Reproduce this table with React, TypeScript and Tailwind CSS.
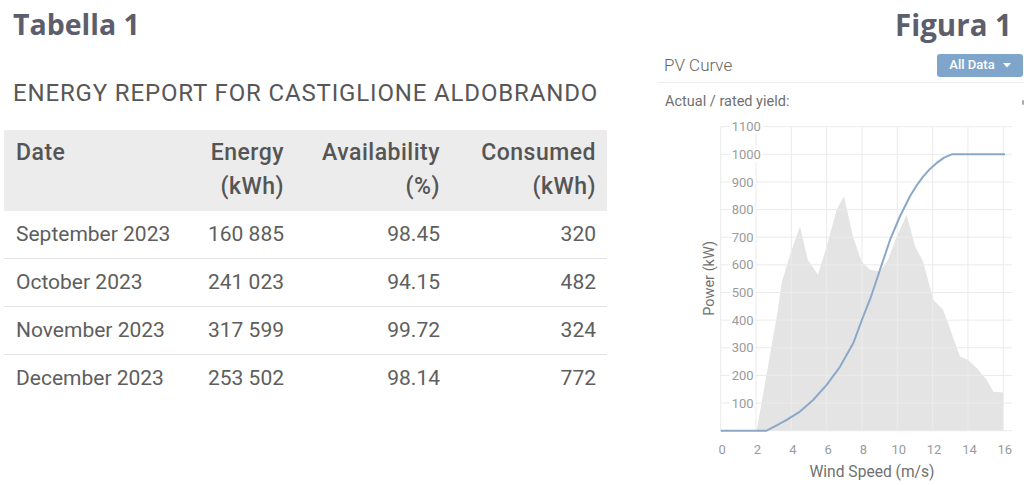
import React from "react";

const rows = [
  { date: "September 2023", energy: "160 885", avail: "98.45", used: "320" },
  { date: "October 2023", energy: "241 023", avail: "94.15", used: "482" },
  { date: "November 2023", energy: "317 599", avail: "99.72", used: "324" },
  { date: "December 2023", energy: "253 502", avail: "98.14", used: "772" },
];

// wind distribution (grey area), [wind m/s, power kW]
const dist = [
  [2.04, 0], [3.24, 437], [3.45, 535], [4.02, 655], [4.49, 739], [4.94, 618],
  [5.51, 564], [6.0, 667], [6.57, 800], [6.98, 847], [7.49, 703], [7.98, 612],
  [8.45, 582], [9.02, 576], [9.47, 618], [9.97, 703], [10.53, 781], [11.0, 667],
  [11.46, 612], [12.04, 474], [12.6, 437], [13.55, 268], [14.02, 256], [14.5, 226],
  [15.06, 184], [15.44, 141], [16.0, 138], [16.0, 0],
];

// power curve
const curve = [
  [0, 0], [2.6, 0], [3.2, 20], [3.74, 39], [4.49, 69], [5.23, 111], [6.0, 166],
  [6.76, 232], [7.51, 317], [8.07, 413], [8.45, 474], [8.64, 510], [9.02, 582],
  [9.59, 691], [10.15, 775], [10.72, 848], [11.1, 888], [11.47, 920], [11.85, 947],
  [12.23, 969], [12.65, 988], [13.08, 1000], [16.1, 1000],
];

const X = (w: number) => 62.7 + w * 17.66;
const Y = (p: number) => 322.7 - p * 0.2764;

function Chart() {
  const area = dist.map(([w, p], i) => `${i ? "L" : "M"}${X(w).toFixed(1)} ${Y(p).toFixed(1)}`).join(" ") + " Z";
  const line = curve.map(([w, p]) => `${X(w).toFixed(1)},${Y(p).toFixed(1)}`).join(" ");
  const ys = [0, 100, 200, 300, 400, 500, 600, 700, 800, 900, 1000, 1100];
  const xs = [0, 2, 4, 6, 8, 10, 12, 14, 16];
  return (
    <svg width="366" height="377" className="block" fontFamily="Roboto, sans-serif">
      <path d={area} fill="#e4e4e4" />
      {ys.map((p) => (
        <line key={p} x1={X(0)} x2={354} y1={Y(p)} y2={Y(p)} stroke="#ebebeb" strokeWidth="1" />
      ))}
      {xs.map((w) => (
        <line key={w} x1={X(w)} x2={X(w)} y1={Y(1100)} y2={Y(0)} stroke="#ebebeb" strokeWidth="1" />
      ))}
      <polyline points={line} fill="none" stroke="#8ba8c7" strokeWidth="2" strokeLinejoin="round" />
      {ys.slice(1).map((p) => (
        <text
          key={p}
          x={73.7}
          y={Y(p) + 4.6}
          fontSize="13"
          fill="#9b9b9b"
          stroke="#fff"
          strokeWidth="5"
          paintOrder="stroke"
        >
          {p}
        </text>
      ))}
      {xs.map((w) => (
        <text key={w} x={X(w) + 1.5} y={346} fontSize="13" fill="#9b9b9b" textAnchor="middle">
          {w}
        </text>
      ))}
      <text x={214} y={368.7} fontSize="15.6" fill="#707070" textAnchor="middle">
        Wind Speed (m/s)
      </text>
      <text
        x={52}
        y={170.4}
        fontSize="14.5"
        fill="#707070"
        textAnchor="middle"
        dominantBaseline="central"
        transform="rotate(-90 52 170.4)"
      >
        Power (kW)
      </text>
    </svg>
  );
}

export default function App() {
  return (
    <div className="w-[1024px] h-[485px] bg-white flex overflow-hidden font-[Roboto,sans-serif]">
      {/* left: table */}
      <div className="w-[658px] shrink-0">
        <h1 className="pl-[13px] pt-[10px] text-[28.5px] leading-none font-bold text-[#5c5e6c] font-['Open_Sans',sans-serif]">
          Tabella 1
        </h1>
        <h2 className="mt-[42.5px] pl-[13px] text-[24px] leading-none tracking-[0.85px] text-[#575757] whitespace-nowrap">
          ENERGY REPORT FOR CASTIGLIONE ALDOBRANDO
        </h2>
        <table className="mt-[25px] ml-[4px] w-[603px] table-fixed border-collapse">
          <colgroup>
            <col className="w-[176px]" />
            <col className="w-[116px]" />
            <col className="w-[156px]" />
            <col className="w-[155px]" />
          </colgroup>
          <thead>
            <tr className="bg-[#ececec] text-[23px] leading-[34px] tracking-[0.5px] text-[#555]">
              <th className="pl-3 pt-[6px] pb-[7px] text-left align-top font-medium">Date</th>
              <th className="pr-3 pt-[6px] pb-[7px] text-right font-medium">
                Energy<br />(kWh)
              </th>
              <th className="pr-3 pt-[6px] pb-[7px] text-right font-medium">
                Availability<br />(%)
              </th>
              <th className="pr-[11px] pt-[6px] pb-[7px] text-right font-medium">
                Consumed<br />(kWh)
              </th>
            </tr>
          </thead>
          <tbody>
            {rows.map((r, i) => (
              <tr
                key={r.date}
                className={`text-[21px] leading-[47px] text-[#5e5e5e] ${i < rows.length - 1 ? "border-b border-[#e4e4e4]" : ""}`}
              >
                <td className="pl-3 whitespace-nowrap">{r.date}</td>
                <td className="pr-3 text-right">{r.energy}</td>
                <td className="pr-3 text-right">{r.avail}</td>
                <td className="pr-[11px] text-right">{r.used}</td>
              </tr>
            ))}
          </tbody>
        </table>
      </div>

      {/* right: chart */}
      <div className="flex-1 flex flex-col">
        <div className="pt-[10px] pr-[12px] text-right text-[29.5px] leading-none font-bold text-[#5c5e6c] font-['Open_Sans',sans-serif]">
          Figura 1
        </div>
        <div className="mt-[8.5px] h-[35px] flex items-center justify-between border-b border-[#ececec] pl-[6px]">
          <span className="text-[17px] leading-none font-light text-[#666]">PV Curve</span>
          <button className="mr-[1px] w-[86px] h-[23px] rounded-[3px] bg-[#7fa5cb] text-white text-[13px] font-medium flex items-center justify-center gap-2">
            All Data
            <svg width="8" height="5" viewBox="0 0 8 5">
              <path d="M0 0h8L4 4.5z" fill="#fff" />
            </svg>
          </button>
        </div>
        <div className="mt-[13px] h-[12px] pl-[7px] flex justify-between items-center">
          <span className="text-[14.5px] leading-none text-[#707070]">Actual / rated yield:</span>
          <span className="w-[2px] h-[5px] bg-[#aaa] rounded-full" />
        </div>
        <Chart />
      </div>
    </div>
  );
}
